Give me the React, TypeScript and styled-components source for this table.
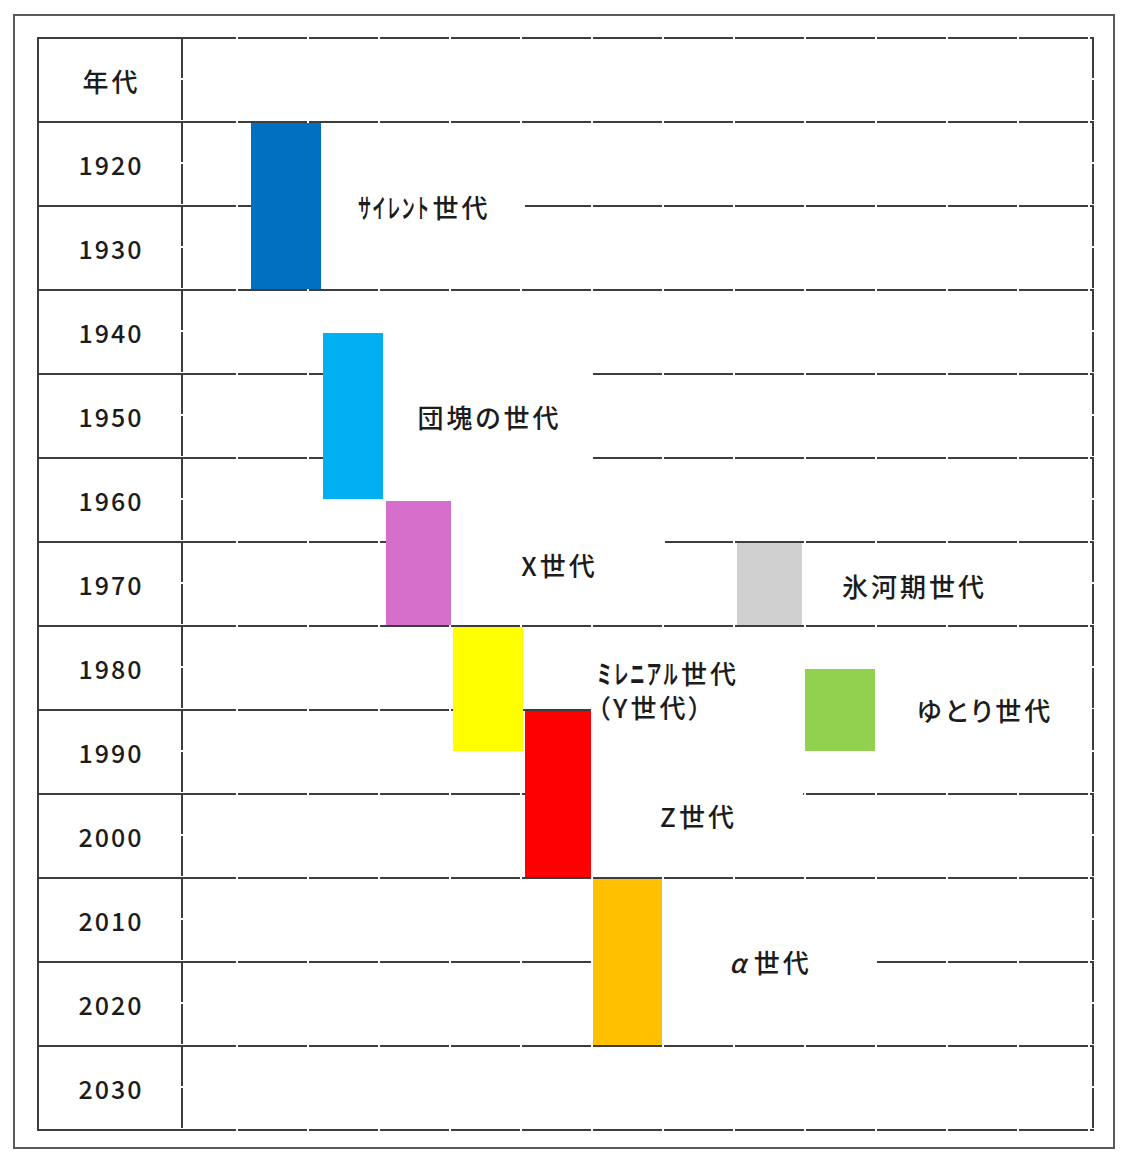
import React from 'react';
import styled, { createGlobalStyle } from 'styled-components';

const ROW = 84;
const LINE = '#3d3d3d';
const START_YEAR = 1920;
const YEARS = [1920, 1930, 1940, 1950, 1960, 1970, 1980, 1990, 2000, 2010, 2020, 2030];
const LABEL_FONT = 26;
const LABEL_SPACING = 3;

// y of a year boundary inside the chart (row 0 is the header)
const yearToY = (year: number) => ROW + ((year - START_YEAR) / 10) * ROW;

interface Generation {
  id: string;
  color: string;
  from: number;
  to: number;
  x: number;
  width: number;
}

interface GenerationLabel {
  id: string;
  x: number;
  y: number;
  w: number;
  h: number;
  align?: 'center' | 'left';
  content: React.ReactNode;
}

const GlobalStyle = createGlobalStyle`
  html, body {
    margin: 0;
    padding: 0;
    background: #fff;
  }
  body {
    font-family: "Noto Sans CJK JP", "Noto Sans", sans-serif;
    color: #1c1c1c;
  }
`;

const Frame = styled.div`
  box-sizing: border-box;
  width: 1102px;
  height: 1135px;
  margin: 14px 0 0 13px;
  padding: 21px 0 0 22px;
  border: 2px solid #5b5b5b;
`;

const Table = styled.div`
  display: flex;
  width: 1057px;
`;

const YearColumn = styled.div`
  box-sizing: border-box;
  width: 144px;
  border-left: 2px solid ${LINE};
  border-bottom: 2px solid ${LINE};
`;

const YearCell = styled.div<{ $header?: boolean }>`
  box-sizing: border-box;
  height: ${ROW}px;
  border-top: 2px solid ${LINE};
  display: flex;
  align-items: center;
  justify-content: center;
  font-size: ${(p) => (p.$header ? 26 : 25)}px;
  letter-spacing: ${(p) => (p.$header ? 3 : 2)}px;
  font-weight: 500;
  padding-left: ${(p) => (p.$header ? 3 : 2)}px;
`;

const Chart = styled.div`
  position: relative;
  flex: 1;
  height: ${ROW * 13 + 2}px;
  background-image:
    linear-gradient(to bottom, transparent 0 2px, ${LINE} 2px 100%),
    linear-gradient(to bottom, transparent 0 2px, ${LINE} 2px 100%),
    linear-gradient(to right, transparent 0 2px, ${LINE} 2px 100%);
  background-size: 2px 42px, 2px 42px, 71px 2px;
  background-repeat: repeat-y, repeat-y, repeat-x;
  background-position: left 0 top 41px, right 0 top 41px, 55px bottom;
`;

const GridRow = styled.div`
  height: ${ROW}px;
  background-image: linear-gradient(to right, transparent 0 2px, ${LINE} 2px 100%);
  background-size: 71px 2px;
  background-repeat: repeat-x;
  background-position: 55px 0;
`;

const Bar = styled.div<{ $color: string; $x: number; $y: number; $w: number; $h: number }>`
  position: absolute;
  left: ${(p) => p.$x}px;
  top: ${(p) => p.$y}px;
  width: ${(p) => p.$w}px;
  height: ${(p) => p.$h}px;
  background: ${(p) => p.$color};
`;

// white text box that hides the grid lines behind its caption
const Label = styled.div<{ $x: number; $y: number; $w: number; $h: number; $align: string }>`
  position: absolute;
  box-sizing: border-box;
  left: ${(p) => p.$x}px;
  top: ${(p) => p.$y}px;
  width: ${(p) => p.$w}px;
  height: ${(p) => p.$h}px;
  background: #fff;
  display: flex;
  flex-direction: column;
  justify-content: center;
  align-items: ${(p) => (p.$align === 'left' ? 'flex-start' : 'center')};
  padding-left: ${(p) => (p.$align === 'left' ? 6 : 3)}px;
  font-size: ${LABEL_FONT}px;
  font-weight: 500;
  letter-spacing: ${LABEL_SPACING}px;
  line-height: 34px;
  white-space: nowrap;
  font-feature-settings: "palt";
`;

// narrow (half-width looking) katakana, as in the original sheet
const KanaBox = styled.span<{ $width: number }>`
  display: inline-block;
  width: ${(p) => p.$width}px;
  vertical-align: top;
`;

const KanaText = styled.span<{ $scale: number }>`
  display: inline-block;
  font-feature-settings: normal;
  font-weight: 700;
  transform: scaleX(${(p) => p.$scale});
  transform-origin: left center;
`;

const Kana: React.FC<{ text: string; scale: number }> = ({ text, scale }) => (
  <KanaBox $width={Math.round(text.length * (LABEL_FONT + LABEL_SPACING) * scale) + 1}>
    <KanaText $scale={scale}>{text}</KanaText>
  </KanaBox>
);

const Alpha = styled.span`
  font-style: italic;
  margin-right: 5px;
`;

const GENERATIONS: Generation[] = [
  { id: 'silent', color: '#0070c0', from: 1920, to: 1940, x: 70, width: 70 },
  { id: 'dankai', color: '#00b0f0', from: 1945, to: 1965, x: 142, width: 60 },
  { id: 'x', color: '#d66fcc', from: 1965, to: 1980, x: 205, width: 65 },
  { id: 'millennial', color: '#ffff00', from: 1980, to: 1995, x: 272, width: 70 },
  { id: 'z', color: '#ff0000', from: 1990, to: 2010, x: 344, width: 66 },
  { id: 'alpha', color: '#ffc000', from: 2010, to: 2030, x: 412, width: 69 },
  { id: 'ice', color: '#d0d0d0', from: 1970, to: 1980, x: 556, width: 65 },
  { id: 'yutori', color: '#92d050', from: 1985, to: 1995, x: 624, width: 70 },
];

const LABELS: GenerationLabel[] = [
  {
    id: 'silent',
    x: 140,
    y: 130,
    w: 204,
    h: 80,
    content: (
      <span>
        <Kana text="サイレント" scale={0.5} />
        世代
      </span>
    ),
  },
  { id: 'dankai', x: 202, y: 300, w: 210, h: 160, content: '団塊の世代' },
  { id: 'x', x: 270, y: 478, w: 214, h: 100, content: 'X世代' },
  { id: 'ice', x: 621, y: 512, w: 222, h: 74, content: '氷河期世代' },
  {
    id: 'millennial',
    x: 410,
    y: 596,
    w: 214,
    h: 114,
    align: 'left',
    content: (
      <>
        <span>
          <Kana text="ミレニアル" scale={0.57} />
          世代
        </span>
        <span>（Y世代）</span>
      </>
    ),
  },
  { id: 'yutori', x: 694, y: 600, w: 217, h: 146, content: 'ゆとり世代' },
  { id: 'z', x: 410, y: 720, w: 212, h: 118, content: 'Z世代' },
  {
    id: 'alpha',
    x: 481,
    y: 860,
    w: 214,
    h: 130,
    content: (
      <span>
        <Alpha>α</Alpha>世代
      </span>
    ),
  },
];

const App: React.FC = () => {
  return (
    <>
      <GlobalStyle />
      <Frame>
        <Table>
          <YearColumn>
            <YearCell $header>年代</YearCell>
            {YEARS.map((year) => (
              <YearCell key={year}>{year}</YearCell>
            ))}
          </YearColumn>
          <Chart>
            {Array.from({ length: 13 }, (_, i) => (
              <GridRow key={i} />
            ))}
            {GENERATIONS.map((g) => {
              const top = yearToY(g.from) + 2;
              const bottom = yearToY(g.to);
              return <Bar key={g.id} $color={g.color} $x={g.x} $y={top} $w={g.width} $h={bottom - top} />;
            })}
            {LABELS.map((l) => (
              <Label key={l.id} $x={l.x} $y={l.y} $w={l.w} $h={l.h} $align={l.align ?? 'center'}>
                {l.content}
              </Label>
            ))}
          </Chart>
        </Table>
      </Frame>
    </>
  );
};

export default App;
